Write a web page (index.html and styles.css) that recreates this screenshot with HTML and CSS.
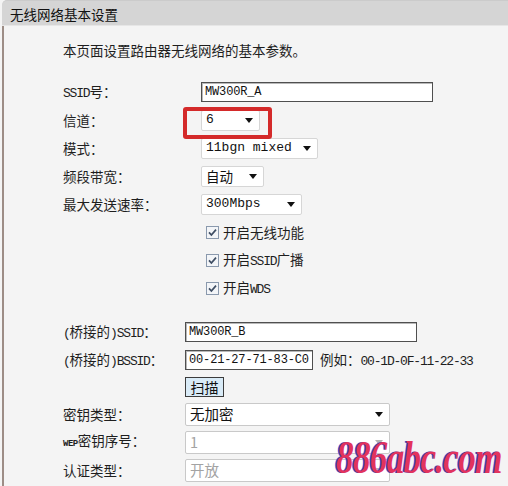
FILE: index.html
```html
<!DOCTYPE html>
<html lang="zh-CN">
<head>
    <meta charset="UTF-8">
    <title>无线网络基本设置</title>
    <link rel="stylesheet" href="styles.css">
</head>
<body>

<div class="panel">
    <div class="panel-head">无线网络基本设置</div>

    <div class="panel-body">
        <p class="intro">本页面设置路由器无线网络的基本参数。</p>

        <!-- basic wireless settings -->
        <div class="form form-top">
            <span class="label"><span class="en">SSID</span>号：</span>
            <div><div class="input w232">MW300R_A</div></div>

            <span class="label">信道：</span>
            <div class="mark-cell">
                <div class="select mono w59"><span>6</span><i class="caret"></i></div>
                <span class="mark"></span>
            </div>

            <span class="label">模式：</span>
            <div><div class="select mono w117"><span>11bgn mixed</span><i class="caret"></i></div></div>

            <span class="label">频段带宽：</span>
            <div><div class="select w63 h22"><span>自动</span><i class="caret"></i></div></div>

            <span class="label">最大发送速率：</span>
            <div><div class="select mono w101 h23"><span>300Mbps</span><i class="caret"></i></div></div>

            <div class="check">
                <svg class="box" width="13" height="13" viewBox="0 0 13 13"><rect x="0.5" y="0.5" width="12" height="12" fill="#f3f5f8" stroke="#8a99ad"/><path d="M3 6.4 L5.4 9 L10 3.6" fill="none" stroke="#3e4d63" stroke-width="1.7"/></svg>
                <span>开启无线功能</span>
            </div>
            <div class="check">
                <svg class="box" width="13" height="13" viewBox="0 0 13 13"><rect x="0.5" y="0.5" width="12" height="12" fill="#f3f5f8" stroke="#8a99ad"/><path d="M3 6.4 L5.4 9 L10 3.6" fill="none" stroke="#3e4d63" stroke-width="1.7"/></svg>
                <span>开启<span class="en">SSID</span>广播</span>
            </div>
            <div class="check">
                <svg class="box" width="13" height="13" viewBox="0 0 13 13"><rect x="0.5" y="0.5" width="12" height="12" fill="#f3f5f8" stroke="#8a99ad"/><path d="M3 6.4 L5.4 9 L10 3.6" fill="none" stroke="#3e4d63" stroke-width="1.7"/></svg>
                <span>开启<span class="en">WDS</span></span>
            </div>
        </div>

        <!-- WDS bridge settings -->
        <div class="form form-wds">
            <span class="label"><span class="en">(</span>桥接的<span class="en">)SSID</span>：</span>
            <div><div class="input w232">MW300R_B</div></div>

            <span class="label"><span class="en">(</span>桥接的<span class="en">)BSSID</span>：</span>
            <div class="inline">
                <div class="input w128">00-21-27-71-83-C0</div>
                <span class="hint">例如：<span class="en">00-1D-0F-11-22-33</span></span>
            </div>

            <div class="btn-cell"><button class="btn">扫描</button></div>

            <span class="label">密钥类型：</span>
            <div><div class="select big w205"><span>无加密</span><i class="caret"></i></div></div>

            <span class="label"><span class="en small">WEP</span>密钥序号：</span>
            <div><div class="select big w205 disabled"><span>1</span><i class="caret"></i></div></div>

            <span class="label">认证类型：</span>
            <div><div class="select big w205 disabled"><span>开放</span><i class="caret"></i></div></div>
        </div>
    </div>
</div>

<div class="stamp">886abc.com</div>

</body>
</html>
```

FILE: styles.css
```css
body {
    margin: 0;
    width: 508px;
    height: 486px;
    overflow: hidden;
    position: relative;
    background-color: #f4f4f4;
    font-family: "Noto Sans CJK SC", sans-serif;
    font-size: 13.5px;
    line-height: 20px;
    color: #1e1e1e;
}
/* narrow latin letters mixed into the chinese labels */
.en {
    font-family: "Liberation Mono", monospace;
    font-size: 13px;
    letter-spacing: -1.2px;
}
.en.small {
    font-size: 9px;
    font-weight: bold;
    letter-spacing: -0.5px;
}
.mono {
    font-family: "Liberation Mono", monospace;
    font-size: 13px;
}

.panel {
    margin-left: 2px;
}
.panel-head {
    height: 26px;
    line-height: 26px;
    padding-left: 8px;
    background-color: #d5d5d5;
    border-top: 1px solid #cbcbcb;
    border-bottom: 1px solid #e6e6e6;
    border-top-left-radius: 5px;
    box-sizing: border-box;
    color: #111;
}
.panel-body {
    border-left: 2px solid #9d8d86;
    padding: 14px 0 0 59px;
    height: 460px;
    box-sizing: border-box;
}
.intro {
    margin: 0 0 18px;
    line-height: 20px;
}

.form {
    display: grid;
    grid-auto-rows: 28px;
    align-items: center;
}
.form-top {
    grid-template-columns: 138px 1fr;
}
.form-wds {
    grid-template-columns: 122px 1fr;
    grid-template-rows: 28px 28px 26px 28px 28px 28px;
    margin-top: 16px;
}
.form > div {
    display: flex;
    align-items: center;
}

.input {
    height: 20px;
    box-sizing: border-box;
    padding: 0 3px;
    border: 1px solid #4f4f4f;
    box-shadow: inset 1px 1px 0 #b8b8b8;
    background-color: #fff;
    font-family: "Liberation Mono", monospace;
    font-size: 12px;
    line-height: 18px;
    letter-spacing: -0.15px;
    white-space: nowrap;
    overflow: hidden;
    color: #111;
}
.w232 { width: 232px; }
.w128 { width: 128px; }
.w59 { width: 59px; }
.w63 { width: 63px; }
.w101 { width: 101px; }
.w117 { width: 117px; }
.w205 { width: 205px; }
.h22 { height: 22px; }
.h23 { height: 23px; }

.select {
    display: flex;
    align-items: center;
    height: 21px;
    box-sizing: border-box;
    padding: 0 6px 0 4px;
    border: 1px solid #d6d6d6;
    border-radius: 2px;
    background-color: #fff;
    color: #111;
}
.caret {
    margin-left: auto;
    width: 0;
    height: 0;
    border-left: 4.5px solid transparent;
    border-right: 4.5px solid transparent;
    border-top: 5px solid #111;
}
.select.big {
    height: 23px;
    font-size: 14.5px;
    border-color: #c9c9c9;
}
.select.disabled {
    color: #a3a3a3;
}
.select.disabled .caret {
    border-top-color: #b3b3b3;
}

/* red annotation frame round the channel box */
.mark-cell {
    position: relative;
}
.mark {
    position: absolute;
    left: -18px;
    top: -3px;
    width: 89px;
    height: 32px;
    box-sizing: border-box;
    border: 4px solid #d42a2a;
    border-radius: 3px;
}

.check {
    grid-column: 2;
    gap: 4px;
    padding-left: 5px;
}
.check .box {
    flex: none;
}

.inline {
    gap: 7px;
}

.btn-cell {
    grid-column: 2;
}
.btn {
    height: 20px;
    width: 39px;
    padding: 0;
    border: 1px solid #3c3c3c;
    background-color: #d9ebf7;
    font-family: "Noto Sans CJK SC", sans-serif;
    font-size: 14px;
    line-height: 18px;
    color: #111;
}

/* site stamp in the bottom corner */
.stamp {
    position: absolute;
    left: 336px;
    top: 432px;
    font-family: "Liberation Serif", serif;
    font-style: italic;
    font-weight: bold;
    font-size: 47px;
    line-height: 50px;
    letter-spacing: -1px;
    color: #e2335e;
    text-shadow: -2px 0 0 #3b45c4;
    transform: scaleX(0.75);
    transform-origin: left top;
    white-space: nowrap;
}
```
